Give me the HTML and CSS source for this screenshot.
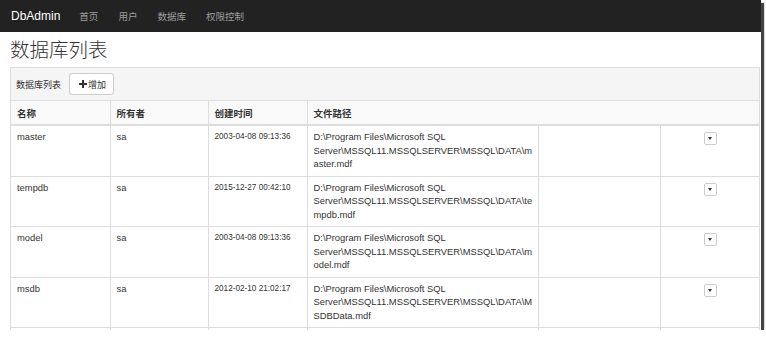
FILE: index.html
```html
<!DOCTYPE html>
<html lang="zh-CN">
<head>
  <meta charset="UTF-8" />
  <title>DbAdmin - 数据库列表</title>
  <link rel="stylesheet" href="styles.css">
</head>
<body>
  <div class="shot">
    <nav class="navbar">
      <span class="brand">DbAdmin</span>
      <ul class="nav">
        <li>首页</li>
        <li>用户</li>
        <li>数据库</li>
        <li>权限控制</li>
      </ul>
    </nav>
    <div class="container">
      <h1>数据库列表</h1>
      <div class="panel">
        <div class="panel-heading">
          <span>数据库列表</span>
          <button class="btn">
            <svg width="8" height="8" viewBox="0 0 8 8"><path d="M4 0v8M0 4h8" stroke="#333" stroke-width="2"/></svg>增加
          </button>
        </div>
        <table>
          <colgroup>
            <col style="width:99px"><col style="width:98px"><col style="width:99px">
            <col style="width:231px"><col style="width:122px"><col>
          </colgroup>
          <thead>
            <tr><th>名称</th><th>所有者</th><th>创建时间</th><th colspan="3">文件路径</th></tr>
          </thead>
          <tbody>
            <tr>
              <td>master</td><td>sa</td><td class="date">2003-04-08 09:13:36</td>
              <td>D:\Program Files\Microsoft SQL <span class="tail">Server\MSSQL11.MSSQLSERVER\MSSQL\DATA\master.mdf</span></td>
              <td></td><td class="act"><span class="caret-btn"></span></td>
            </tr>
            <tr>
              <td>tempdb</td><td>sa</td><td class="date">2015-12-27 00:42:10</td>
              <td>D:\Program Files\Microsoft SQL <span class="tail">Server\MSSQL11.MSSQLSERVER\MSSQL\DATA\tempdb.mdf</span></td>
              <td></td><td class="act"><span class="caret-btn"></span></td>
            </tr>
            <tr>
              <td>model</td><td>sa</td><td class="date">2003-04-08 09:13:36</td>
              <td>D:\Program Files\Microsoft SQL <span class="tail">Server\MSSQL11.MSSQLSERVER\MSSQL\DATA\model.mdf</span></td>
              <td></td><td class="act"><span class="caret-btn"></span></td>
            </tr>
            <tr>
              <td>msdb</td><td>sa</td><td class="date">2012-02-10 21:02:17</td>
              <td>D:\Program Files\Microsoft SQL <span class="tail">Server\MSSQL11.MSSQLSERVER\MSSQL\DATA\MSDBData.mdf</span></td>
              <td></td><td class="act"><span class="caret-btn"></span></td>
            </tr>
            <tr class="empty">
              <td>&nbsp;</td><td></td><td></td><td></td><td></td><td></td>
            </tr>
          </tbody>
        </table>
      </div>
    </div>
  </div>
</body>
</html>
```

FILE: styles.css
```css
body {
  margin: 0;
  background: #fff;
  font-family: 'Liberation Sans', 'Noto Sans CJK SC', sans-serif;
  color: #333;
}
.shot {
  width: 761px;
  height: 330px;
  overflow: hidden;
  background: #fff;
  box-shadow: 3px 3px 1px #444;
}
.navbar {
  height: 32px;
  background: #222;
  display: flex;
  align-items: center;
  padding-left: 11px;
  gap: 19px;
}
.brand {
  color: #fff;
  font-size: 12px;
}
.nav {
  list-style: none;
  margin: 0;
  padding: 0;
  display: flex;
  gap: 20px;
  font-size: 9.5px;
  color: #9d9d9d;
}
.container {
  padding: 0 1px 0 10px;
}
h1 {
  margin: 5px 0 6px;
  font-family: 'Noto Sans CJK SC', sans-serif;
  font-weight: 300;
  font-size: 19.5px;
  line-height: 24px;
  color: #333;
}
.panel {
  border: 1px solid #ddd;
  border-bottom: none;
}
.panel-heading {
  background: #f5f5f5;
  border-bottom: 1px solid #ddd;
  padding: 5px 5px;
  display: flex;
  align-items: center;
  gap: 8px;
  font-size: 9px;
  height: 22px;
}
.btn {
  height: 22px;
  padding: 0 7px 0 9px;
  background: #fff;
  border: 1px solid #ccc;
  border-radius: 3px;
  font-family: 'Noto Sans CJK SC', sans-serif;
  font-size: 9px;
  color: #333;
  display: flex;
  align-items: center;
  gap: 1px;
}
table {
  width: 100%;
  border-collapse: collapse;
  table-layout: fixed;
  font-size: 9.4px;
}
th, td {
  border-left: 1px solid #ddd;
  text-align: left;
  vertical-align: top;
}
th:first-child, td:first-child {
  border-left: none;
}
th {
  background: #f9f9f9;
  font-family: 'Noto Sans CJK SC', sans-serif;
  font-size: 9.5px;
  font-weight: bold;
  height: 23px;
  padding: 0 6px;
  vertical-align: middle;
  border-bottom: 2px solid #ddd;
}
td {
  padding: 4px 4px 5px 6px;
  line-height: 13.5px;
  border-top: 1px solid #ddd;
}
.tail {
  display: inline-block;
  word-break: break-all;
}
tbody tr:first-child td {
  border-top: none;
}
.empty td {
  height: 40px;
}
td.date {
  font-size: 8.2px;
}
td.act {
  text-align: center;
  padding-top: 6px;
}
.caret-btn {
  display: inline-block;
  width: 11px;
  height: 11px;
  border: 1px solid #ccc;
  border-radius: 2px;
  background: #fff;
  position: relative;
}
.caret-btn::after {
  content: '';
  position: absolute;
  left: 3px;
  top: 4px;
  border-left: 2.5px solid transparent;
  border-right: 2.5px solid transparent;
  border-top: 3px solid #333;
}
```
